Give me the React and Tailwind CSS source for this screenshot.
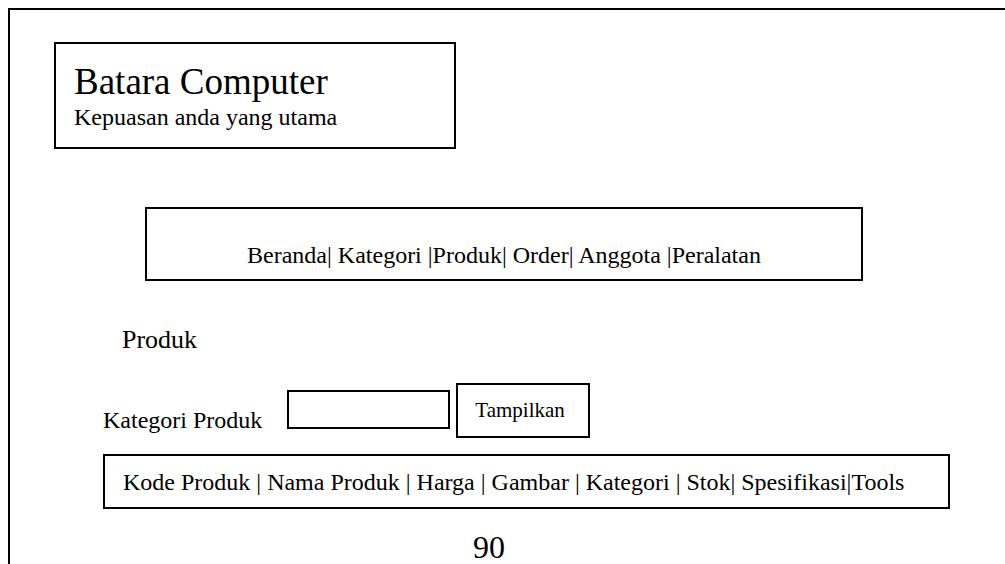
export default function App() {
  const serif = { fontFamily: '"Liberation Serif", "Times New Roman", serif' };
  return (
    <div className="h-[564px] w-[1005px] overflow-hidden bg-white pl-[8px] pt-[8px] text-black" style={serif}>
      <div className="h-[600px] border-l-2 border-t-2 border-black">
        {/* Header box */}
        <div className="ml-[44px] mt-[32px] box-border h-[107px] w-[402px] border-2 border-black pl-[18px] pt-[19px]">
          <div className="text-[37px] leading-none">Batara Computer</div>
          <div className="mt-[5px] text-[24px] leading-none">Kepuasan anda yang utama</div>
        </div>

        {/* Navigation box */}
        <div className="ml-[135px] mt-[58px] box-border h-[74px] w-[718px] border-2 border-black pt-[34px] text-center text-[24px] leading-none">
          Beranda| Kategori |Produk| Order| Anggota |Peralatan
        </div>

        {/* Page title */}
        <div className="ml-[112px] mt-[46px] text-[26px] leading-none">Produk</div>

        {/* Filter row */}
        <div className="ml-[93px] mt-[30px] flex items-start">
          <div className="mt-[25px] text-[24px] leading-none">Kategori Produk</div>
          <div className="ml-[25px] mt-[7px] box-border h-[39px] w-[163px] border-2 border-black"></div>
          <div className="ml-[6px] box-border h-[55px] w-[134px] border-2 border-black pl-[17px] pt-[15px] text-[21px] leading-none">
            Tampilkan
          </div>
        </div>

        {/* Table header box */}
        <div className="ml-[93px] mt-[16px] box-border h-[55px] w-[847px] border-2 border-black pl-[18px] pt-[14px] text-[24px] leading-none whitespace-nowrap">
          Kode Produk | Nama Produk | Harga | Gambar | Kategori | Stok| Spesifikasi|Tools
        </div>

        {/* Page number */}
        <div className="ml-[463px] mt-[22px] text-[32px] leading-none">90</div>
      </div>
    </div>
  );
}
